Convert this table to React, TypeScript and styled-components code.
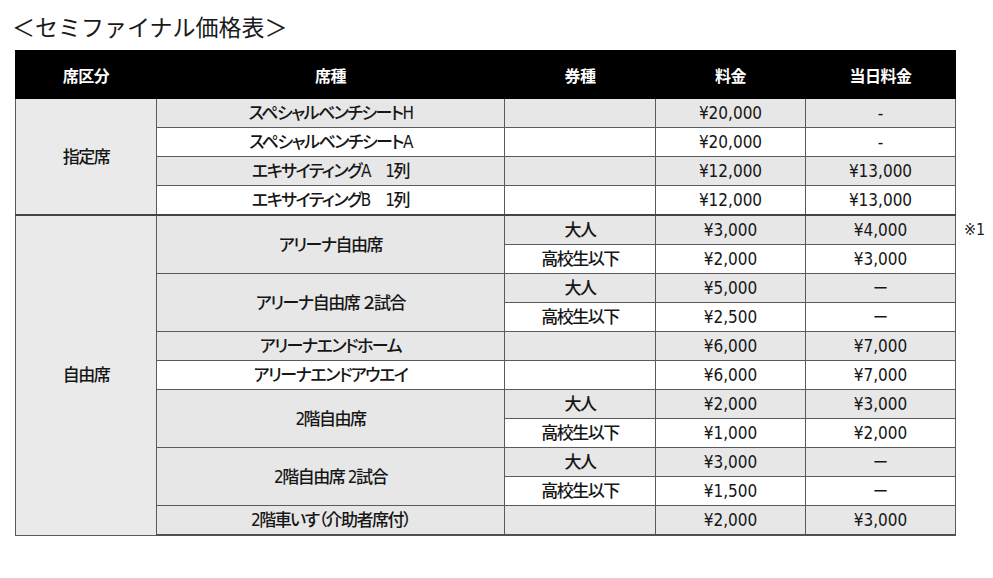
import * as React from 'react';
import styled, { createGlobalStyle } from 'styled-components';

const GlobalStyle = createGlobalStyle`
  body {
    margin: 0;
    background: #fff;
    color: #161616;
    font-family: "DejaVu Sans Condensed", "DejaVu Sans", "Noto Sans CJK JP", sans-serif;
    font-stretch: condensed;
  }
`;

const Page = styled('div')`
  padding: 11px 0 0 0;
`;

const Title = styled('h1')`
  margin: 0 0 8px 12px;
  font-family: "Noto Sans CJK JP", sans-serif;
  font-size: 23px;
  line-height: 31px;
  font-weight: 400;
  color: #1a1a1a;
`;

const Table = styled('table')`
  margin-left: 15px;
  border-collapse: collapse;
  table-layout: fixed;
  width: 978px;

  tbody tr:last-child td:not(:last-child) {
    border-bottom: 2px solid #505050;
  }
`;

const HeadCell = styled('th')`
  height: 47px;
  padding: 0;
  background: #000;
  color: #fff;
  font-family: "Noto Sans CJK JP", sans-serif;
  font-size: 16px;
  font-weight: 700;
  letter-spacing: -0.5px;
  text-align: center;
  vertical-align: middle;
  border: 1px solid #000;
`;

const Cell = styled('td')<{ $gray?: boolean; $top?: boolean; $group?: boolean; $num?: boolean }>`
  height: 28px;
  padding: 0;
  border: 1px solid #5a5a5a;
  ${({ $top }) => $top && 'border-top: 2px solid #444;'}
  background: ${({ $gray, $group }) => ($group ? '#eaeaea' : $gray ? '#e7e7e7' : '#fff')};
  font-size: 17px;
  font-weight: 500;
  letter-spacing: ${({ $num }) => ($num ? '0' : '-1.5px')};
  line-height: 20px;
  font-feature-settings: "palt";
  text-align: center;
  vertical-align: middle;
  white-space: nowrap;
  color: #161616;
`;

const Note = styled('td')`
  border: none;
  padding: 0 0 0 8px;
  font-size: 16px;
  color: #1e1e1e;
  vertical-align: middle;
  white-space: nowrap;
`;

type Line = {
  seat?: { label: string; span: number };
  kind: string;
  price: string;
  day: string;
  note?: string;
};

type Section = { name: string; rows: Line[] };

const sections: Section[] = [
  {
    name: '指定席',
    rows: [
      { seat: { label: 'スペシャルベンチシートH', span: 1 }, kind: '', price: '¥20,000', day: '-' },
      { seat: { label: 'スペシャルベンチシートA', span: 1 }, kind: '', price: '¥20,000', day: '-' },
      { seat: { label: 'エキサイティングA　1列', span: 1 }, kind: '', price: '¥12,000', day: '¥13,000' },
      { seat: { label: 'エキサイティングB　1列', span: 1 }, kind: '', price: '¥12,000', day: '¥13,000' },
    ],
  },
  {
    name: '自由席',
    rows: [
      { seat: { label: 'アリーナ自由席', span: 2 }, kind: '大人', price: '¥3,000', day: '¥4,000', note: '※1' },
      { kind: '高校生以下', price: '¥2,000', day: '¥3,000' },
      { seat: { label: 'アリーナ自由席 ２試合', span: 2 }, kind: '大人', price: '¥5,000', day: '－' },
      { kind: '高校生以下', price: '¥2,500', day: '－' },
      { seat: { label: 'アリーナエンドホーム', span: 1 }, kind: '', price: '¥6,000', day: '¥7,000' },
      { seat: { label: 'アリーナエンドアウエイ', span: 1 }, kind: '', price: '¥6,000', day: '¥7,000' },
      { seat: { label: '2階自由席', span: 2 }, kind: '大人', price: '¥2,000', day: '¥3,000' },
      { kind: '高校生以下', price: '¥1,000', day: '¥2,000' },
      { seat: { label: '2階自由席 2試合', span: 2 }, kind: '大人', price: '¥3,000', day: '－' },
      { kind: '高校生以下', price: '¥1,500', day: '－' },
      { seat: { label: '2階車いす（介助者席付）', span: 1 }, kind: '', price: '¥2,000', day: '¥3,000' },
    ],
  },
];

const PriceTable = () => (
  <Table>
    <colgroup>
      <col style={{ width: 141 }} />
      <col style={{ width: 348 }} />
      <col style={{ width: 151 }} />
      <col style={{ width: 150 }} />
      <col style={{ width: 150 }} />
      <col style={{ width: 38 }} />
    </colgroup>
    <thead>
      <tr>
        <HeadCell>席区分</HeadCell>
        <HeadCell>席種</HeadCell>
        <HeadCell>券種</HeadCell>
        <HeadCell>料金</HeadCell>
        <HeadCell>当日料金</HeadCell>
      </tr>
    </thead>
    <tbody>
      {sections.map((section, s) =>
        section.rows.map((row, i) => {
          const gray = i % 2 === 0;
          const top = s > 0 && i === 0;
          return (
            <tr key={`${s}-${i}`}>
              {i === 0 && (
                <Cell rowSpan={section.rows.length} $group $top={top}>
                  {section.name}
                </Cell>
              )}
              {row.seat && (
                <Cell rowSpan={row.seat.span} $gray={gray} $top={top}>
                  {row.seat.label}
                </Cell>
              )}
              <Cell $gray={gray} $top={top}>{row.kind}</Cell>
              <Cell $gray={gray} $top={top} $num>{row.price}</Cell>
              <Cell $gray={gray} $top={top} $num>{row.day}</Cell>
              <Note>{row.note}</Note>
            </tr>
          );
        })
      )}
    </tbody>
  </Table>
);

const App = () => (
  <Page>
    <GlobalStyle />
    <Title>＜セミファイナル価格表＞</Title>
    <PriceTable />
  </Page>
);

export default App;
